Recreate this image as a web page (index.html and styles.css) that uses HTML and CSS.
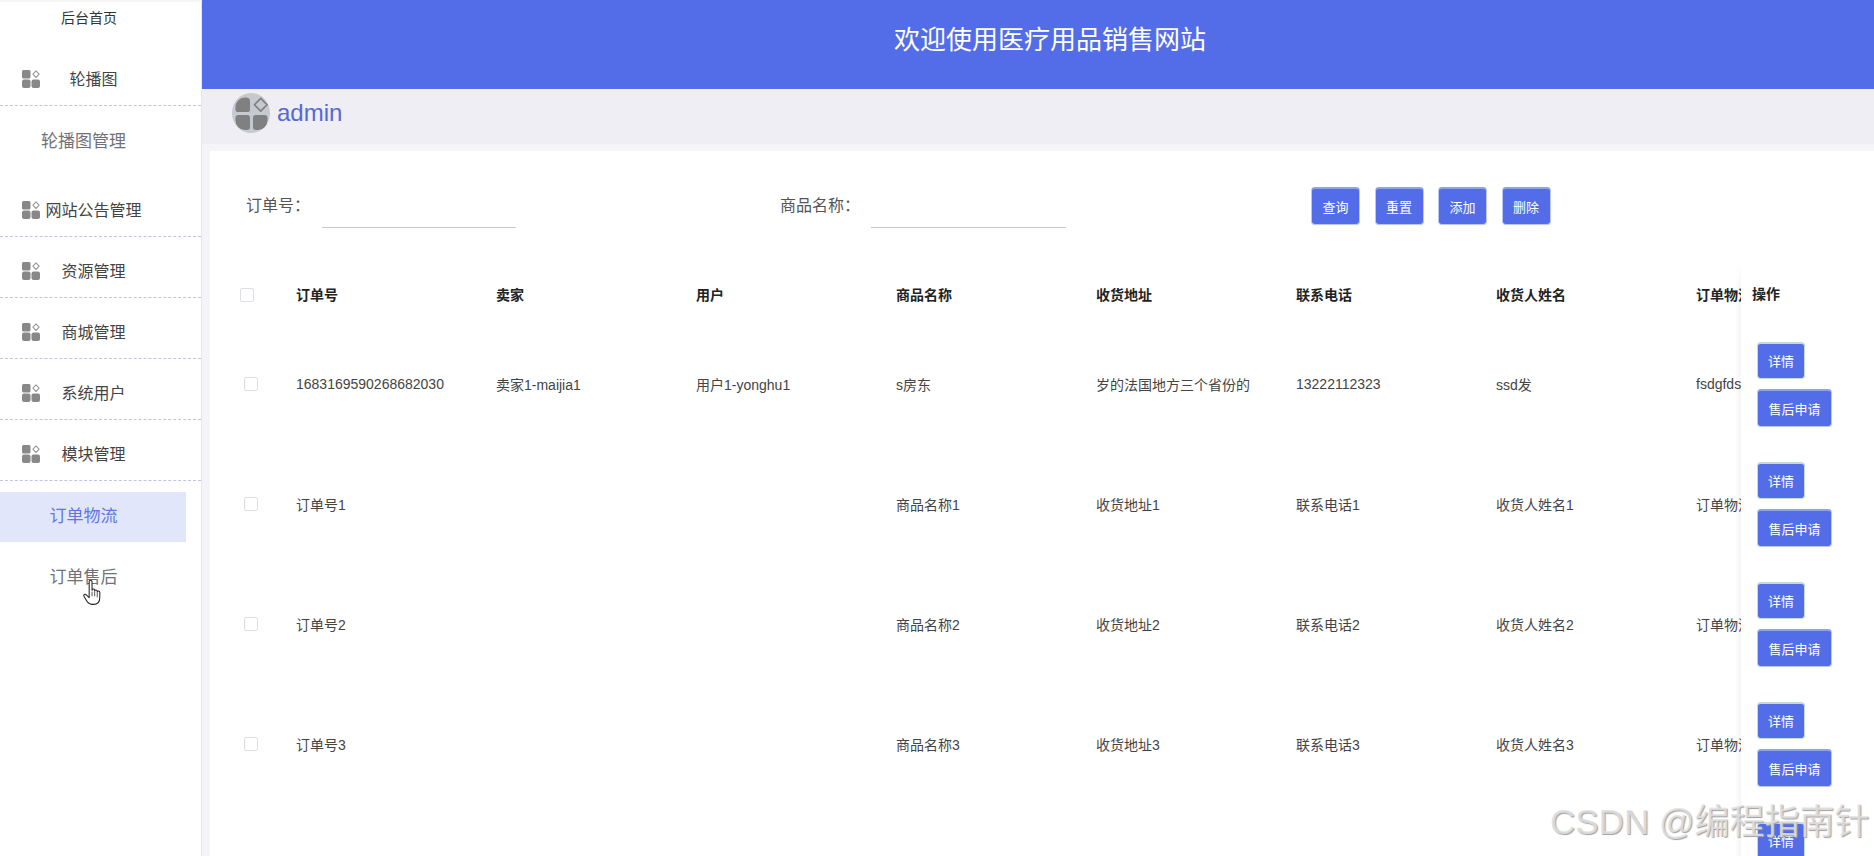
FILE: index.html
```html
<!DOCTYPE html>
<html lang="zh-CN">
<head>
<meta charset="utf-8">
<title>欢迎使用医疗用品销售网站</title>
<link rel="stylesheet" href="styles.css">
</head>
<body>
<svg class="defs" width="0" height="0" aria-hidden="true">
  <symbol id="apps" viewBox="0 0 18 18">
    <rect x="0" y="0" width="8.5" height="8.5" rx="1.5" fill="#888"/>
    <rect x="0" y="9.5" width="8.5" height="8.5" rx="2" fill="#888"/>
    <rect x="9.5" y="9.5" width="8.5" height="8.5" rx="2" fill="#888"/>
    <path d="M14 .9 17.1 4.2 14 7.5 10.9 4.2Z" fill="#fff" stroke="#999" stroke-width="1.1" stroke-linejoin="round"/>
  </symbol>
</svg>
<div class="app">
  <aside class="sidebar">
    <div class="home">后台首页</div>
    <div class="menu-row"><svg class="menu-icon"><use href="#apps"/></svg><span class="menu-label">轮播图</span></div>
    <div class="sub-group"><div class="sub-item sub-large">轮播图管理</div></div>
    <div class="menu-row"><svg class="menu-icon"><use href="#apps"/></svg><span class="menu-label">网站公告管理</span></div>
    <div class="menu-row"><svg class="menu-icon"><use href="#apps"/></svg><span class="menu-label">资源管理</span></div>
    <div class="menu-row"><svg class="menu-icon"><use href="#apps"/></svg><span class="menu-label">商城管理</span></div>
    <div class="menu-row"><svg class="menu-icon"><use href="#apps"/></svg><span class="menu-label">系统用户</span></div>
    <div class="menu-row"><svg class="menu-icon"><use href="#apps"/></svg><span class="menu-label">模块管理</span></div>
    <div class="sub-group">
      <div class="sub-item sub-active">订单物流</div>
      <div class="sub-item">订单售后</div>
    </div>
  </aside>
  <main class="main">
    <header class="topbar">欢迎使用医疗用品销售网站</header>
    <div class="userbar">
      <span class="avatar">
        <svg class="avatar-icon" viewBox="0 0 36 36">
          <path d="M11 1.500h1.500a4 4 0 0 1 4 4v8a3 3 0 0 1-3 3H4.500a3 3 0 0 1-3-3v-2a10 10 0 0 1 9.500-10Z" fill="#808080"/>
          <path d="M4.500 19.500h9a3 3 0 0 1 3 3v9.500a3 3 0 0 1-3 3H11a10 10 0 0 1-9.500-10v-2.500a3 3 0 0 1 3-3Z" fill="#808080"/>
          <path d="M22.500 19.500h9a3 3 0 0 1 3 3v2.500a10 10 0 0 1-9.500 10h-2.500a3 3 0 0 1-3-3v-9.500a3 3 0 0 1 3-3Z" fill="#808080"/>
          <path d="M27.500 2.500 34 9 27.500 15.500 21 9Z" fill="#c6c9d0" stroke="#808080" stroke-width="1.800" stroke-linejoin="round"/>
        </svg>
      </span>
      <span class="username">admin</span>
    </div>
    <section class="card">
      <form class="search">
        <label class="field-label field-order">订单号：</label>
        <input class="field-input field-input-order" type="text">
        <label class="field-label field-goods">商品名称：</label>
        <input class="field-input field-input-goods" type="text">
        <div class="actions">
          <button class="btn btn-search" type="button">查询</button>
          <button class="btn btn-search" type="button">重置</button>
          <button class="btn btn-search" type="button">添加</button>
          <button class="btn btn-search" type="button">删除</button>
        </div>
      </form>
      <div class="table">
        <div class="table-scroll">
          <div class="row row-head">
            <div class="check-cell check-head"><span class="check"></span></div>
            <div>订单号</div><div>卖家</div><div>用户</div><div>商品名称</div><div>收货地址</div><div>联系电话</div><div>收货人姓名</div><div>订单物流</div>
          </div>
          <div class="row">
            <div class="check-cell"><span class="check"></span></div>
            <div>1683169590268682030</div><div>卖家1-maijia1</div><div>用户1-yonghu1</div><div>s房东</div><div>岁的法国地方三个省份的</div><div>13222112323</div><div>ssd发</div><div>fsdgfdsgfd</div>
          </div>
          <div class="row">
            <div class="check-cell"><span class="check"></span></div>
            <div>订单号1</div><div></div><div></div><div>商品名称1</div><div>收货地址1</div><div>联系电话1</div><div>收货人姓名1</div><div>订单物流1</div>
          </div>
          <div class="row">
            <div class="check-cell"><span class="check"></span></div>
            <div>订单号2</div><div></div><div></div><div>商品名称2</div><div>收货地址2</div><div>联系电话2</div><div>收货人姓名2</div><div>订单物流2</div>
          </div>
          <div class="row">
            <div class="check-cell"><span class="check"></span></div>
            <div>订单号3</div><div></div><div></div><div>商品名称3</div><div>收货地址3</div><div>联系电话3</div><div>收货人姓名3</div><div>订单物流3</div>
          </div>
        </div>
        <div class="table-fixed">
          <div class="fixed-head">操作</div>
          <div class="fixed-cell"><button class="btn btn-detail" type="button">详情</button><button class="btn btn-after" type="button">售后申请</button></div>
          <div class="fixed-cell"><button class="btn btn-detail" type="button">详情</button><button class="btn btn-after" type="button">售后申请</button></div>
          <div class="fixed-cell"><button class="btn btn-detail" type="button">详情</button><button class="btn btn-after" type="button">售后申请</button></div>
          <div class="fixed-cell"><button class="btn btn-detail" type="button">详情</button><button class="btn btn-after" type="button">售后申请</button></div>
          <div class="fixed-cell"><button class="btn btn-detail" type="button">详情</button><button class="btn btn-after" type="button">售后申请</button></div>
        </div>
      </div>
    </section>
  </main>
</div>
<svg class="cursor" viewBox="0 0 20 28" aria-hidden="true">
  <path d="M6.500 2.500c0-2 3-2 3 0v9c0-1.500 2.800-1.500 2.800 0v1c0-1.500 2.700-1.500 2.700 0v1c0-1.400 2.700-1.300 2.700.2v5.300c0 4-2 7.500-6.500 7.500h-1.700c-3 0-4.300-1.300-6-4.300L1 18c-.9-1.700 1.300-3 2.500-1.500l3 3Z" fill="#fff" stroke="#222" stroke-width="1.100" stroke-linejoin="round"/>
  <path d="M9.500 13v5M12.300 13v5M15 14v5" fill="none" stroke="#222" stroke-width=".8"/>
</svg>
<div class="watermark">CSDN @编程指南针</div>
</body>
</html>
```
FILE: styles.css
```css
* { box-sizing: border-box; }
html, body { margin: 0; padding: 0; height: 100%; overflow: hidden; background: #fff; }
body {
  font-family: "Liberation Sans", "Noto Sans CJK SC", sans-serif;
  font-size: 14px;
  color: #333;
}
.defs { position: absolute; }
.app { display: flex; height: 856px; overflow: hidden; }

/* sidebar */
.sidebar {
  width: 202px;
  flex: none;
  border-right: 1px solid #e6e6ec;
  border-top: 2px solid #f5f5f7;
  background: #fff;
}
.home {
  height: 43px;
  padding: 8px 23px 0 0;
  font-size: 14px;
  line-height: 16px;
  text-align: center;
  color: #333;
}
.menu-row {
  display: flex;
  align-items: flex-start;
  height: 61px;
  padding: 25px 0 0 22px;
  border-bottom: 1px dashed #bfc3ea;
}
.menu-icon { width: 18px; height: 18px; flex: none; }
.menu-label {
  width: 107px;
  margin-top: -2px;
  text-align: center;
  font-size: 16px;
  line-height: 24px;
  color: #444;
  white-space: nowrap;
}
.sub-group { padding-bottom: 9px; }
.sub-item {
  width: 186px;
  height: 50px;
  margin-top: 11px;
  padding-right: 19px;
  font-size: 17px;
  line-height: 50px;
  text-align: center;
  color: #707278;
}
.sub-active { background: #e1e6fb; color: #5f76e4; }

/* main */
.main { flex: 1; min-width: 0; display: flex; flex-direction: column; background: #f4f4f9; }
.topbar {
  height: 89px;
  flex: none;
  padding-left: 24px;
  background: #536de8;
  color: #fff;
  font-size: 26px;
  line-height: 81px;
  text-align: center;
}
.userbar {
  height: 55px;
  flex: none;
  display: flex;
  align-items: flex-start;
  padding: 4px 0 0 30px;
  background: #eeeef4;
}
.avatar {
  width: 38px;
  height: 40px;
  border-radius: 50%;
  background: #c6c9d0;
  display: flex;
  align-items: center;
  justify-content: center;
}
.avatar-icon { width: 35px; height: 37px; }
.username {
  margin-left: 7px;
  font-size: 24px;
  line-height: 40px;
  color: #5568d8;
}
.card {
  flex: 1;
  min-height: 0;
  margin: 7px 0 0 8px;
  background: #fff;
  overflow: hidden;
}

/* search */
.search { display: flex; align-items: flex-start; height: 42px; margin-top: 36px; padding-left: 36px; }
.field-label { font-size: 16px; line-height: 38px; color: #555; white-space: nowrap; }
.field-order { width: 76px; }
.field-goods { width: 91px; margin-left: 264px; }
.field-input {
  height: 41px;
  padding: 0;
  border: 0;
  border-bottom: 1px solid #c8c8c8;
  background: transparent;
  outline: 0;
}
.field-input-order { width: 194px; }
.field-input-goods { width: 195px; }
.actions { display: flex; gap: 14.500px; margin-left: 245px; }

/* buttons */
.btn {
  display: block;
  padding: 0;
  border: 1px solid #bcc7f6;
  border-top: 2px solid #8fa1f0;
  border-radius: 4px;
  background: #536de8;
  color: #fff;
  font-family: inherit;
  font-size: 13px;
}
.btn-search { width: 49px; height: 38px; }
.btn-detail { width: 48px; height: 37px; border-color: #c3dbd0; border-top-color: #c3dbd0; }
.btn-after { width: 75px; height: 38px; margin-top: 10px; }

/* table */
.table { display: flex; margin-top: 35px; }
.table-scroll { width: 1531px; flex: none; overflow: hidden; }
.row {
  display: grid;
  grid-template-columns: 86px repeat(8, 200px);
  align-items: center;
  width: 1686px;
  height: 120px;
  font-size: 14px;
  color: #444;
}
.row > div { white-space: nowrap; }
.row-head { height: 60px; font-weight: bold; color: #222; }
.check-cell { display: flex; padding-left: 34px; }
.check-head { padding-left: 30px; margin-top: 2px; }
.check {
  display: block;
  width: 14px;
  height: 14px;
  border: 1px solid #dcdfe6;
  border-radius: 2px;
  background: #fff;
}
.table-fixed {
  flex: 1;
  min-width: 0;
  background: #fff;
  position: relative;
}
.table-fixed::before {
  content: "";
  position: absolute;
  top: 0;
  bottom: 0;
  left: -6px;
  width: 6px;
  background: linear-gradient(to left, rgba(0, 0, 0, .045), rgba(0, 0, 0, 0));
  -webkit-mask-image: linear-gradient(to bottom, transparent, #000 24px);
  mask-image: linear-gradient(to bottom, transparent, #000 24px);
}
.fixed-head { height: 60px; padding-left: 11px; font-weight: bold; line-height: 60px; color: #222; }
.fixed-cell {
  height: 120px;
  padding-left: 16px;
  display: flex;
  flex-direction: column;
  align-items: flex-start;
  justify-content: center;
}

/* overlays */
.cursor { position: absolute; left: 83px; top: 579px; width: 19px; height: 27px; }
.watermark {
  position: absolute;
  left: 1550px;
  top: 800px;
  font-size: 35px;
  line-height: 44px;
  white-space: nowrap;
  color: rgba(226, 226, 226, .85);
  text-shadow: 1px 1px 1px #a0a0a0;
}
```
